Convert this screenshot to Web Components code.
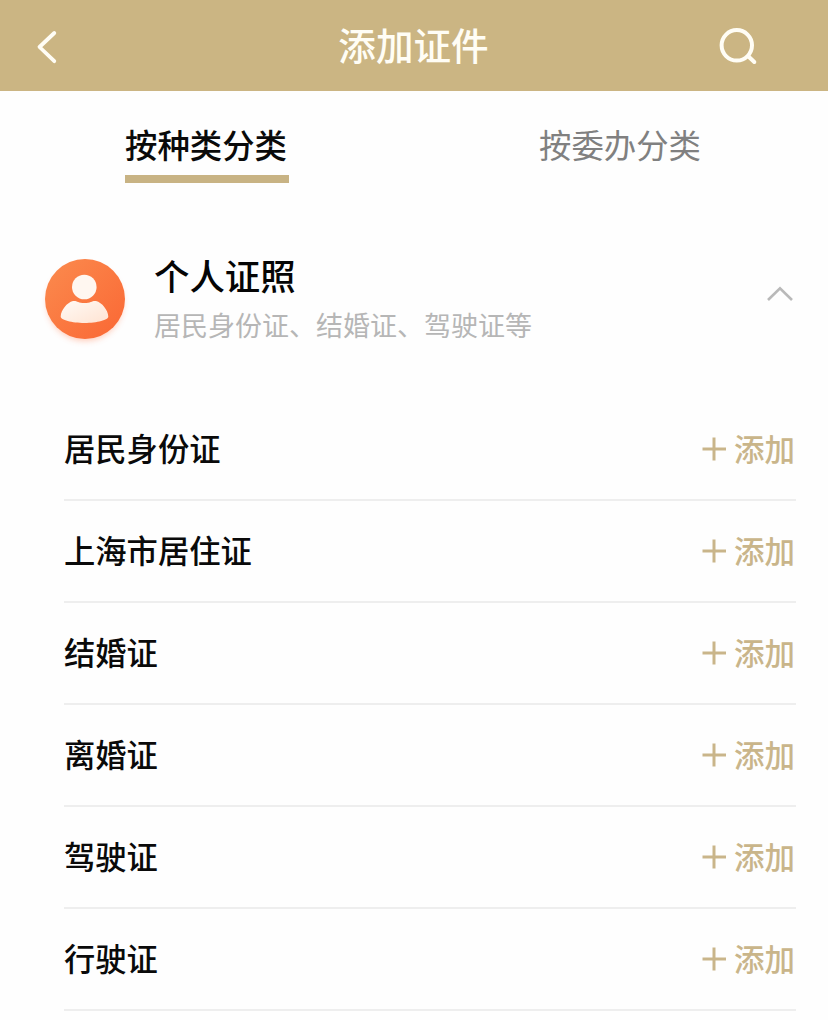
<!DOCTYPE html>
<html lang="zh-CN">
<head>
<meta charset="utf-8">
<title>添加证件</title>
<style>
    body {
        margin: 0;
        background: #fefefe;
        font-family: "Noto Sans CJK SC", sans-serif;
        --gold: #cbb583;
    }
    main {
        display: block;
        height: 1020px;
        overflow: hidden;
    }
</style>
</head>
<body>
<main>
    <top-bar>添加证件</top-bar>
    <tab-bar>
        <tab-item active>按种类分类</tab-item>
        <tab-item>按委办分类</tab-item>
    </tab-bar>
    <card-group>
        <span slot="title">个人证照</span>
        <span slot="desc">居民身份证、结婚证、驾驶证等</span>
        <card-row>居民身份证</card-row>
        <card-row>上海市居住证</card-row>
        <card-row>结婚证</card-row>
        <card-row>离婚证</card-row>
        <card-row>驾驶证</card-row>
        <card-row>行驶证</card-row>
    </card-group>
</main>

<script>
class TopBar extends HTMLElement {

    constructor() {
        super()
        this.shadow = this.attachShadow({ mode: 'open' })
    }

    connectedCallback() {
        this.shadow.innerHTML = `
        <style>
            :host {
                display: grid;
                grid-template-columns: 120px 1fr 120px;
                align-items: center;
                height: 91px;
                background: var(--gold);
                color: #fffdf5;
            }
            h1 {
                margin: 0;
                padding: 0 1px 3px 0;
                font-size: 37.6px;
                font-weight: 500;
                line-height: 88px;
                text-align: center;
            }
            svg {
                display: block;
                fill: none;
                stroke: currentColor;
                stroke-linecap: round;
                stroke-linejoin: round;
            }
        </style>
        <svg width="120" height="91" stroke-width="3.8"><path d="M54.3 33 L39.5 47 L54.3 61.2"/></svg>
        <h1><slot></slot></h1>
        <svg width="120" height="91" stroke-width="4"><circle cx="28.8" cy="45.3" r="15.2"/><path d="M40.5 56.500 L46.3 62"/></svg>
        `
    }
}

class TabBar extends HTMLElement {

    constructor() {
        super()
        this.shadow = this.attachShadow({ mode: 'open' })
    }

    connectedCallback() {
        this.shadow.innerHTML = `
        <style>
            :host {
                display: grid;
                grid-template-columns: 1fr 1fr;
                justify-items: center;
                height: 92px;
            }
        </style>
        <slot></slot>
        `
    }
}

class TabItem extends HTMLElement {

    constructor() {
        super()
        this.shadow = this.attachShadow({ mode: 'open' })
    }

    connectedCallback() {
        this.shadow.innerHTML = `
        <style>
            :host {
                display: block;
                box-sizing: border-box;
                height: 92px;
                padding: 29px 2px 0 0;
                font-size: 32.4px;
                line-height: 48px;
                color: #808080;
            }
            :host([active]) {
                color: #0a0a0a;
                font-weight: 500;
                border-bottom: 8px solid #c8b384;
            }
        </style>
        <slot></slot>
        `
    }
}

class CardGroup extends HTMLElement {

    constructor() {
        super()
        this.shadow = this.attachShadow({ mode: 'open' })
    }

    connectedCallback() {
        this.shadow.innerHTML = `
        <style>
            :host {
                display: block;
            }
            header {
                display: flex;
                height: 148px;
                padding: 68px 35px 0 35px;
            }
            .avatar {
                flex: none;
                margin-right: 19px;
            }
            .text {
                flex: 1;
            }
            h2 {
                margin: -1px 0 0;
                font-size: 35.4px;
                font-weight: 500;
                line-height: 50px;
                color: #050505;
            }
            p {
                margin: 5px 0 0;
                font-size: 27px;
                font-weight: 400;
                line-height: 40px;
                color: #b6b6b6;
            }
            .rows {
                padding: 0 32px 0 64px;
            }
        </style>
        <header>
            <svg class="avatar" width="100" height="110" viewBox="35 251 100 110">
                <defs>
                    <linearGradient id="disc" x1="0" y1="0" x2="1" y2="1">
                        <stop offset="0" stop-color="#fb8b4e"/>
                        <stop offset="1" stop-color="#fa6734"/>
                    </linearGradient>
                    <linearGradient id="body" x1="0" y1="0" x2="1" y2="1">
                        <stop offset="0" stop-color="#fffaf5"/>
                        <stop offset="1" stop-color="#ffe3d2"/>
                    </linearGradient>
                    <filter id="glow" x="-20%" y="-20%" width="140%" height="140%">
                        <feGaussianBlur stdDeviation="3"/>
                    </filter>
                </defs>
                <circle cx="85" cy="303" r="38" fill="#ff8a60" opacity=".45" filter="url(#glow)"/>
                <circle cx="85" cy="299" r="40" fill="url(#disc)"/>
                <path d="M73 301 C77 300.5 78 303 84.5 303 C91 303 92 300.5 96 301 C102 302.5 108 310 108.3 316.5 C108.5 320 97 323 84.5 323 C72 323 60.5 320 60.7 316.5 C61 310 67 302.5 73 301 Z" fill="url(#body)"/>
                <circle cx="84.3" cy="287" r="12.3" fill="#fff7f0"/>
            </svg>
            <div class="text">
                <h2><slot name="title"></slot></h2>
                <p><slot name="desc"></slot></p>
            </div>
            <svg width="26" height="90" fill="none" stroke="#b9b9b9" stroke-width="2.6"><path d="M1 49 L13 37.3 L25 49"/></svg>
        </header>
        <div class="rows"><slot></slot></div>
        `
    }
}

class CardRow extends HTMLElement {

    constructor() {
        super()
        this.shadow = this.attachShadow({ mode: 'open' })
    }

    connectedCallback() {
        this.shadow.innerHTML = `
        <style>
            :host {
                display: flex;
                box-sizing: border-box;
                align-items: center;
                justify-content: space-between;
                height: 102px;
                border-bottom: 2px solid #eeeeee;
                font-size: 31.3px;
                font-weight: 500;
                color: #0a0a0a;
            }
            .name {
                padding-bottom: 3px;
            }
            .add {
                display: flex;
                align-items: center;
                gap: 8px;
                padding-right: 1px;
                font-size: 30.5px;
                color: #c9b58a;
            }
            .label {
                padding-bottom: 2px;
            }
        </style>
        <span class="name"><slot></slot></span>
        <span class="add">
            <svg width="25" height="24" fill="none" stroke="currentColor" stroke-width="3"><path d="M1.5 12 H25 M13 0.5 V23.5"/></svg>
            <span class="label">添加</span>
        </span>
        `
    }
}

customElements.define('top-bar', TopBar)
customElements.define('tab-bar', TabBar)
customElements.define('tab-item', TabItem)
customElements.define('card-group', CardGroup)
customElements.define('card-row', CardRow)
</script>
</body>
</html>
